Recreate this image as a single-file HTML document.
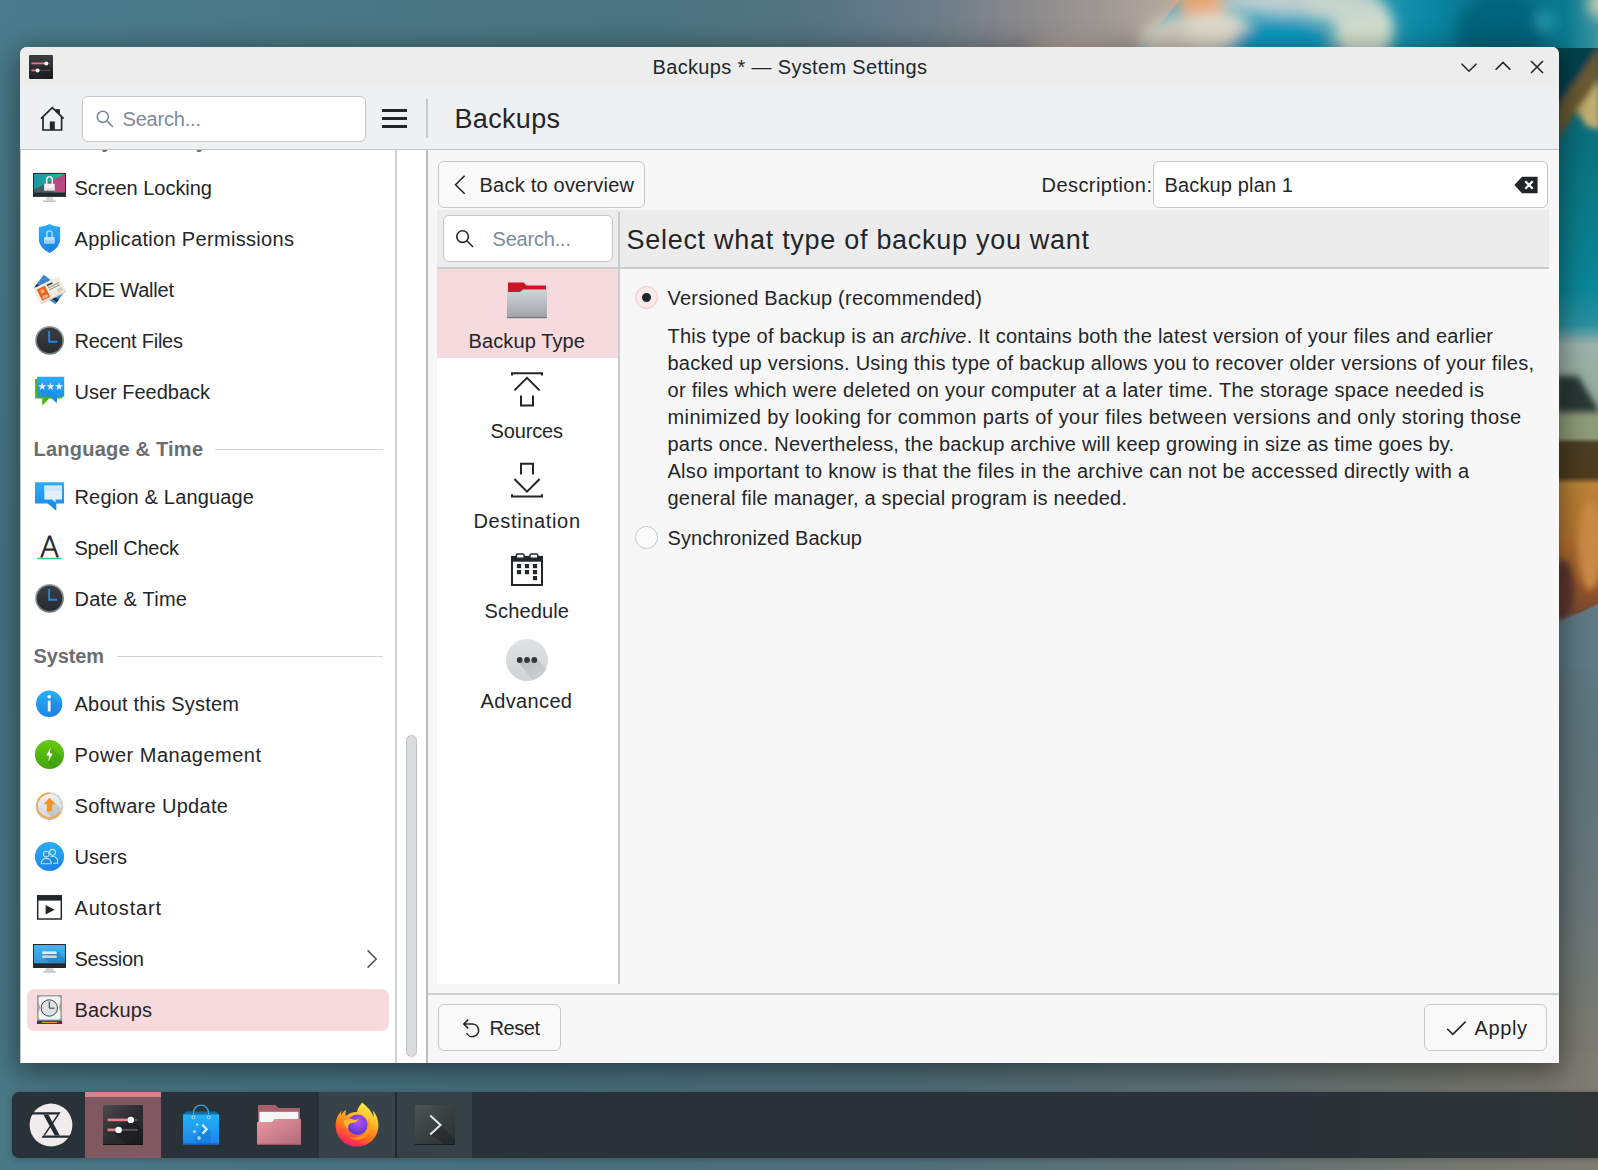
<!DOCTYPE html>
<html lang="en">
<head>
<meta charset="utf-8">
<title>Backups * — System Settings</title>
<style>
html,body{margin:0;padding:0;}
body{width:1598px;height:1170px;overflow:hidden;position:relative;background:#44707f;font-family:"Liberation Sans","DejaVu Sans",sans-serif;color:#232629;}
.a{position:absolute;}
.t{position:absolute;white-space:nowrap;font-size:20px;line-height:24px;color:#232629;letter-spacing:0px;}
.b{font-weight:bold;}
.h1{font-size:27px;line-height:32px;}
#wall{position:absolute;left:0;top:0;width:1598px;height:1170px;}
#winshadow{position:absolute;left:20px;top:47px;width:1539px;height:1016px;border-radius:7px 7px 0 0;box-shadow:0 6px 28px 4px rgba(0,0,0,0.42);background:#f7f7f7;}
#titlebar{position:absolute;left:20px;top:47px;width:1539px;height:40px;background:#ededed;border-radius:7px 7px 0 0;}
#toolbar{position:absolute;left:20px;top:87px;width:1539px;height:62px;background:#eff0f1;}
#tbline{position:absolute;left:20px;top:149px;width:1539px;height:1px;background:#c3c7ca;}
#side{position:absolute;left:20px;top:150px;width:375px;height:913px;background:#fff;overflow:hidden;}
#side .t,#side .a,#side .hl,#side svg{margin-left:-20px;margin-top:-150px;}
#sideline{position:absolute;left:395px;top:150px;width:2px;height:913px;background:#d0d2d3;}
#sbarea{position:absolute;left:397px;top:150px;width:30px;height:913px;background:#fff;}
#mainline{position:absolute;left:426px;top:150px;width:2px;height:913px;background:#b9bcc1;}
.field{position:absolute;background:#fff;border:1px solid #c4c8ca;border-radius:6px;box-sizing:border-box;}
.btn{position:absolute;background:#f9f9f9;border:1px solid #c6c9cb;border-radius:6px;box-sizing:border-box;}
.ph{color:#7d8a99;}
.hdr{color:#6a6e71;font-weight:bold;}
.hl{position:absolute;height:1px;background:#d3d6d8;}
svg{position:absolute;overflow:visible;}
</style>
</head>
<body>
<svg id="wall" width="1598" height="1170" viewBox="0 0 1598 1170">
<defs>
<linearGradient id="gbase" x1="0" y1="0" x2="0" y2="1"><stop offset="0" stop-color="#4b7c8c"/><stop offset="0.5" stop-color="#467482"/><stop offset="1" stop-color="#4a7987"/></linearGradient>
<linearGradient id="gtop" x1="0" y1="0" x2="1" y2="0"><stop offset="0" stop-color="#4b7c8c"/><stop offset="0.40" stop-color="#49737f"/><stop offset="0.50" stop-color="#537481"/><stop offset="0.58" stop-color="#6a7c88"/><stop offset="0.64" stop-color="#8a898b"/><stop offset="0.70" stop-color="#a39c97"/><stop offset="0.73" stop-color="#b3a79d"/></linearGradient>
<linearGradient id="gtr" x1="0" y1="0" x2="1" y2="0"><stop offset="0" stop-color="#6fb2c4"/><stop offset="0.18" stop-color="#2aa0bf"/><stop offset="0.45" stop-color="#3aa2b8"/><stop offset="0.62" stop-color="#0c8ba7"/><stop offset="0.80" stop-color="#076c82"/><stop offset="0.93" stop-color="#0a7a8e"/><stop offset="1" stop-color="#3b93a0"/></linearGradient>
<linearGradient id="gright" x1="0" y1="0" x2="0" y2="1"><stop offset="0.0062" stop-color="#07505b"/><stop offset="0.0796" stop-color="#0a6f7c"/><stop offset="0.1416" stop-color="#0a7a86"/><stop offset="0.2212" stop-color="#0b8797"/><stop offset="0.2522" stop-color="#2b92a0"/><stop offset="0.2699" stop-color="#9fb3ac"/><stop offset="0.3186" stop-color="#93a99c"/><stop offset="0.3319" stop-color="#8f9d7c"/><stop offset="0.3522" stop-color="#8f9a78"/><stop offset="0.3566" stop-color="#4a3f25"/><stop offset="0.3867" stop-color="#4d3b20"/><stop offset="0.3929" stop-color="#b98438"/><stop offset="0.4425" stop-color="#b9752e"/><stop offset="0.4867" stop-color="#93532b"/><stop offset="0.5062" stop-color="#7a4a30"/><stop offset="0.5115" stop-color="#5f7a84"/><stop offset="0.6195" stop-color="#5e757c"/><stop offset="0.7788" stop-color="#6b7677"/><stop offset="0.8850" stop-color="#7b7a71"/><stop offset="1.0000" stop-color="#7d7b72"/></linearGradient>
<linearGradient id="gbot" x1="0" y1="0" x2="1" y2="0"><stop offset="0" stop-color="#497886"/><stop offset="0.3" stop-color="#46707d"/><stop offset="0.55" stop-color="#4f6e78"/><stop offset="0.75" stop-color="#5f7276"/><stop offset="0.9" stop-color="#737670"/><stop offset="1" stop-color="#7f7c72"/></linearGradient>
<filter id="bl" x="-40%" y="-40%" width="180%" height="180%"><feGaussianBlur stdDeviation="7"/></filter>
<filter id="bl2" x="-30%" y="-30%" width="160%" height="160%"><feGaussianBlur stdDeviation="3"/></filter>
<clipPath id="ctop"><rect x="0" y="0" width="1598" height="62"/></clipPath>
<clipPath id="cright"><rect x="1552" y="48" width="46" height="1122"/></clipPath>
</defs>
<rect width="1598" height="1170" fill="url(#gbase)"/>
<rect x="0" y="0" width="1598" height="62" fill="url(#gtop)"/>
<g clip-path="url(#ctop)">
<polygon points="1182,-2 1598,-2 1598,62 1128,62" fill="url(#gtr)"/>
<g filter="url(#bl)">
<ellipse cx="1186" cy="40" rx="46" ry="26" fill="#cdc9be"/><ellipse cx="1203" cy="2" rx="28" ry="14" fill="#eaa873"/>
<ellipse cx="1218" cy="30" rx="34" ry="18" fill="#dedacb"/>
<ellipse cx="1168" cy="54" rx="30" ry="12" fill="#cfc7b8"/>
<ellipse cx="1280" cy="44" rx="46" ry="22" fill="#1199bf"/>
<ellipse cx="1300" cy="0" rx="80" ry="16" fill="#bccdcf"/>
<ellipse cx="1364" cy="30" rx="30" ry="34" fill="#d3dfce"/>
<ellipse cx="1340" cy="8" rx="40" ry="14" fill="#c6d4cc"/>
<ellipse cx="1500" cy="30" rx="44" ry="34" fill="#05647a"/>
<ellipse cx="1600" cy="4" rx="12" ry="14" fill="#c4cdb0"/><ellipse cx="1545" cy="22" rx="10" ry="8" fill="#2a9db0"/>
<ellipse cx="1075" cy="52" rx="46" ry="14" fill="#aea398"/>
</g>
</g>
<g clip-path="url(#cright)">
<rect x="1545" y="40" width="53" height="1130" fill="url(#gright)"/>
<g filter="url(#bl2)">
<polygon points="1545,40 1600,40 1600,47 1556,109 1545,109" fill="#06424d"/>
<polygon points="1556,109 1600,47 1600,79 1556,141" fill="#6b5a33"/>
<polygon points="1600,79 1600,130 1586,126 1577,111" fill="#c3ad70"/>
<polygon points="1556,376 1578,376 1600,412 1556,412" fill="#2b3936"/>
<ellipse cx="1590" cy="545" rx="12" ry="45" fill="#c98a45"/>
<ellipse cx="1562" cy="590" rx="12" ry="30" fill="#5d3830"/>
</g>
<polygon points="1556,624 1600,603 1600,670 1556,670" fill="#5f7a84"/>
</g>
<rect x="0" y="1050" width="1598" height="120" fill="url(#gbot)"/>
</svg>

<div id="winshadow"></div>
<div id="titlebar"></div>
<div id="toolbar"></div>
<div id="tbline"></div>
<div id="side">
<svg width="0" height="0" style="left:0;top:0"><defs>
<linearGradient id="gblue" x1="0" y1="0" x2="0" y2="1"><stop offset="0" stop-color="#28aef5"/><stop offset="1" stop-color="#1c86ea"/></linearGradient>
<linearGradient id="ggreen" x1="0" y1="0" x2="0" y2="1"><stop offset="0" stop-color="#67cb12"/><stop offset="1" stop-color="#3fa50c"/></linearGradient>
<linearGradient id="gclk" x1="0" y1="0" x2="0" y2="1"><stop offset="0" stop-color="#9aa3a7"/><stop offset="1" stop-color="#6d777c"/></linearGradient><linearGradient id="gclk2" x1="0" y1="0" x2="0" y2="1"><stop offset="0" stop-color="#3a3e42"/><stop offset="1" stop-color="#272b2e"/></linearGradient>
<linearGradient id="gscr" x1="0" y1="0" x2="0" y2="1"><stop offset="0" stop-color="#4ab3ec"/><stop offset="1" stop-color="#2f96dc"/></linearGradient>
<linearGradient id="ggrey" x1="0" y1="0" x2="0" y2="1"><stop offset="0" stop-color="#f2f2f2"/><stop offset="1" stop-color="#d4d6d7"/></linearGradient>
<g id="iclock"><circle cx="16.600" cy="16.300" r="14.400" fill="url(#gclk)"/><circle cx="16.600" cy="16.300" r="12.800" fill="url(#gclk2)"/><path d="M16.150 7 V17.800 H24.100" fill="none" stroke="#2b84d6" stroke-width="1.900"/></g>
</defs></svg>
<!-- clipped header at top -->
<span class="t hdr" style="left:35.5px;top:129px;letter-spacing:-0.244px">Security &amp; Privacy</span>
<!-- Screen Locking -->
<svg style="left:33px;top:171px" width="33" height="33" viewBox="0 0 33 33">
<defs><linearGradient id="gsl1" x1="0" y1="0" x2="1" y2="0"><stop offset="0" stop-color="#1f97a8"/><stop offset="0.550" stop-color="#1fa89b"/><stop offset="1" stop-color="#1fc088"/></linearGradient>
<linearGradient id="gsl2" x1="0" y1="0" x2="1" y2="1"><stop offset="0" stop-color="#a8478f"/><stop offset="1" stop-color="#c4477a"/></linearGradient></defs>
<rect x="0" y="1.900" width="33" height="24" fill="#26292c"/>
<rect x="1" y="2.900" width="31" height="18.400" fill="url(#gsl1)"/>
<polygon points="32,2.900 32,21.300 21.500,21.300 15.500,11.300" fill="url(#gsl2)"/>
<polygon points="1,18.600 15.500,11.300 21.500,21.300 1,21.300" fill="#4e5d61"/>
<path d="M13.700 13 V8.600 a2.800 2.800 0 0 1 5.600 0 V13" fill="none" stroke="#e9f1f1" stroke-width="1.500"/>
<rect x="11.100" y="12.700" width="10.600" height="6.700" fill="#f3f3f3"/>
<rect x="11.100" y="17.400" width="10.600" height="2" fill="#dedede"/>
<polygon points="13.200,25.900 20,25.900 20.400,29.600 12.800,29.600" fill="#d4d8da"/><rect x="9.900" y="29.600" width="13" height="1.200" fill="#aab4b8"/>
</svg>
<span class="t" style="left:74.5px;top:176px;letter-spacing:-0.029px">Screen Locking</span>
<!-- Application Permissions -->
<svg style="left:33px;top:222px" width="33" height="33" viewBox="0 0 33 33">
<path d="M16.500 2 C13 3.800 9.500 4.600 5.900 4.900 V17 C5.900 23.500 11 28.400 16.500 30.900 C22 28.400 27.100 23.500 27.100 17 V4.900 C23.500 4.600 20 3.800 16.500 2 Z" fill="url(#gblue)"/>
<polygon points="21.700,15.100 27,20.400 24,25.400 19,29.400 11.100,21.400" fill="#1565c0" opacity="0.150"/>
<path d="M13.900 15.300 V11.700 a2.600 2.700 0 0 1 5.200 0 V15.300" fill="none" stroke="#a7d5f7" stroke-width="1.500"/>
<rect x="11.100" y="15.100" width="10.600" height="6.300" rx="0.400" fill="#bfe0fa"/>
<rect x="11.100" y="18.400" width="10.600" height="3" fill="#9bcff7"/>
</svg>
<span class="t" style="left:74.5px;top:227px;letter-spacing:0.326px">Application Permissions</span>
<!-- KDE Wallet -->
<svg style="left:33px;top:273px" width="33" height="33" viewBox="0 0 33 33">
<g transform="rotate(36 16.5 16.5)"><rect x="3" y="8" width="27" height="17" rx="1" fill="#3c86d0"/><rect x="3" y="19.500" width="27" height="3" fill="#232a33"/></g>
<g transform="rotate(-26 16.5 16.5)"><rect x="2.5" y="8.5" width="28" height="17.5" rx="1.2" fill="#efece2"/><rect x="2.5" y="24.600" width="28" height="1.400" fill="#d6d1c2"/>
<rect x="5" y="11" width="9" height="12.5" rx="0.8" fill="#e8651f"/><circle cx="9.5" cy="15" r="2" fill="#f6b48c"/><path d="M6.2 22.4 a3.3 3.3 0 0 1 6.6 0 Z" fill="#f6b48c"/>
<rect x="16" y="11" width="6" height="1.6" fill="#333"/><rect x="16" y="14" width="12" height="1" fill="#8a8577"/><rect x="16" y="16.2" width="12" height="1" fill="#8a8577"/><rect x="23" y="19.5" width="5.5" height="3.5" fill="#d6ccb6"/></g>
</svg>
<span class="t" style="left:74.5px;top:278px;letter-spacing:-0.224px">KDE Wallet</span>
<!-- Recent Files -->
<svg style="left:33px;top:324px" width="33" height="33" viewBox="0 0 33 33"><use href="#iclock"/></svg>
<span class="t" style="left:74.5px;top:329px;letter-spacing:-0.241px">Recent Files</span>
<!-- User Feedback -->
<svg style="left:33px;top:375px" width="33" height="33" viewBox="0 0 33 33">
<polygon points="2.100,4 29.200,4 29.200,23.600 16.200,23.600 9.200,30.700 9.200,23.600 2.100,23.600" fill="#4fb416"/>
<polygon points="4,1.800 31.200,1.800 31.200,21.700 24.100,21.700 23.800,28.300 17,21.700 4,21.700" fill="url(#gblue)"/>
<polygon points="6,14 13,11 23.800,21.700 23.800,26 17,21.700 10,21.700" fill="#1565c0" opacity="0.120"/>
<g fill="#e4f1fd"><polygon id="st" points="9.20,7.50 10.23,10.18 13.10,10.33 10.86,12.14 11.61,14.92 9.20,13.35 6.79,14.92 7.54,12.14 5.30,10.33 8.17,10.18"/><use href="#st" x="8.300"/><use href="#st" x="16.900"/></g>
</svg>
<span class="t" style="left:74.5px;top:380px;letter-spacing:-0.010px">User Feedback</span>
<!-- header -->
<span class="t hdr" style="left:33.5px;top:437px;letter-spacing:0.227px">Language &amp; Time</span>
<div class="hl" style="left:215px;top:449px;width:168px"></div>
<!-- Region & Language -->
<svg style="left:33px;top:480px" width="33" height="33" viewBox="0 0 33 33">
<polygon points="2,2.300 31,2.300 31,23.600 23.300,23.600 23.300,30.800 14.600,23.600 2,23.600" fill="url(#gblue)"/>
<polygon points="11.400,5.600 29,5.600 29,19.400 22.600,19.400 22.600,22.600 19,19.400 11.400,19.400" fill="#e3f0fc"/>
<polygon points="11.400,5.600 29,5.600 29,11 11.400,11" fill="#c9e2f9" opacity="0.7"/>
</svg>
<span class="t" style="left:74.5px;top:485px;letter-spacing:0.167px">Region &amp; Language</span>
<!-- Spell Check -->
<svg style="left:33px;top:531px" width="33" height="33" viewBox="0 0 33 33">
<text x="16.700" y="25.500" text-anchor="middle" font-family="'DejaVu Sans Light','DejaVu Sans','Liberation Sans',sans-serif" font-weight="200" font-size="28.200" fill="#232629" stroke="#232629" stroke-width="0.800" stroke-linejoin="round">A</text>
<rect x="4" y="26.800" width="24.600" height="1.400" fill="#2ecc71"/>
</svg>
<span class="t" style="left:74.5px;top:536px;letter-spacing:-0.222px">Spell Check</span>
<!-- Date & Time -->
<svg style="left:33px;top:582px" width="33" height="33" viewBox="0 0 33 33"><use href="#iclock"/></svg>
<span class="t" style="left:74.5px;top:587px;letter-spacing:0.245px">Date &amp; Time</span>
<!-- header -->
<span class="t hdr" style="left:33.5px;top:644px;letter-spacing:-0.131px">System</span>
<div class="hl" style="left:117px;top:656px;width:266px"></div>
<!-- About this System -->
<svg style="left:33px;top:687px" width="33" height="33" viewBox="0 0 33 33">
<circle cx="16.200" cy="16.800" r="13.200" fill="url(#gblue)"/>
<polygon points="17.600,8 29,19.600 26,26 19.600,29.400 16,25" fill="#1565c0" opacity="0.180"/>
<rect x="14.800" y="13.600" width="2.800" height="10.800" fill="#f4f9fe"/><circle cx="16.200" cy="9.800" r="1.800" fill="#f4f9fe"/>
</svg>
<span class="t" style="left:74.5px;top:692px;letter-spacing:0.207px">About this System</span>
<!-- Power Management -->
<svg style="left:33px;top:738px" width="33" height="33" viewBox="0 0 33 33">
<circle cx="16.5" cy="16.5" r="14.6" fill="url(#ggreen)"/>
<polygon points="18,9 30,21 26,28 19,30.8 15,24" fill="#2e7d07" opacity="0.2"/>
<polygon points="17.6,9.6 13.2,17.4 16.2,17.4 15.2,23.6 19.8,15.4 16.8,15.4" fill="#fff"/>
</svg>
<span class="t" style="left:74.5px;top:743px;letter-spacing:0.501px">Power Management</span>
<!-- Software Update -->
<svg style="left:33px;top:789px" width="33" height="33" viewBox="0 0 33 33">
<circle cx="16.500" cy="17.300" r="13.700" fill="#b4b8ba"/>
<circle cx="16.500" cy="16.600" r="13.500" fill="url(#ggrey)"/>
<polygon points="19.500,11 28.800,20.500 25.200,25.600 19.500,29.400 13.500,23" fill="#8f9496" opacity="0.3"/>
<circle cx="16.500" cy="16.600" r="12.400" fill="none" stroke="#c9cccd" stroke-width="1.300"/>
<path d="M16.500 4.200 A12.400 12.400 0 1 0 27.200 22.800" fill="none" stroke="#f7a431" stroke-width="1.500"/>
<polygon points="16.500,8.800 22.400,15.200 19.100,15.200 19.100,22.600 13.900,22.600 13.900,15.200 10.600,15.200" fill="#f8931c"/>
</svg>
<span class="t" style="left:74.5px;top:794px;letter-spacing:0.323px">Software Update</span>
<!-- Users -->
<svg style="left:33px;top:840px" width="33" height="33" viewBox="0 0 33 33">
<circle cx="16.5" cy="16.5" r="14.6" fill="url(#gblue)"/>
<polygon points="15,12 29.500,22 26,27.600 20,30.600 9,23.600" fill="#1565c0" opacity="0.160"/><g fill="none" stroke="#e3f1fd" stroke-width="1.100" opacity="0.820"><circle cx="19.600" cy="12.300" r="2.900"/><path d="M17.600 16.700 a5.200 5.200 0 0 1 7.200 5 V23.200 H20.200"/><circle cx="13.300" cy="14.100" r="2.800"/><path d="M8.200 23.700 a5.100 5.300 0 0 1 10.200 0 Z"/></g>
</svg>
<span class="t" style="left:74.5px;top:845px;letter-spacing:0.066px">Users</span>
<!-- Autostart -->
<svg style="left:33px;top:891px" width="33" height="33" viewBox="0 0 33 33">
<rect x="4.7" y="5" width="23.6" height="23" fill="#fff" stroke="#232629" stroke-width="1.5"/>
<rect x="4" y="4.2" width="25" height="5.4" fill="#232629"/>
<polygon points="12.6,14 21.6,18.7 12.6,23.4" fill="#232629"/>
</svg>
<span class="t" style="left:74.5px;top:896px;letter-spacing:0.807px">Autostart</span>
<!-- Session -->
<svg style="left:33px;top:942px" width="33" height="33" viewBox="0 0 33 33">
<rect x="0" y="2" width="33" height="24" fill="#26292c"/>
<rect x="1" y="3" width="31" height="18.3" fill="url(#gscr)"/>
<polygon points="24,9 32,17 32,21.3 17,21.3 9.5,14" fill="#1a5f9c" opacity="0.35"/>
<rect x="9.3" y="9.4" width="14.4" height="2.6" fill="#e6e9eb"/><rect x="9.3" y="13.4" width="14.4" height="2.6" fill="#cfd4d7"/>
<polygon points="13,26 20,26 21.3,29.4 11.7,29.4" fill="#d0d4d6"/><rect x="10" y="29.4" width="13" height="1.2" fill="#a9bdc8"/>
</svg>
<span class="t" style="left:74.5px;top:947px;letter-spacing:-0.276px">Session</span>
<svg style="left:366px;top:949px" width="12" height="20" viewBox="0 0 12 20" fill="none" stroke="#4d5256" stroke-width="1.5"><path d="M1.6 1.4 L10.2 10 L1.6 18.6"/></svg>
<!-- Backups (selected) -->
<div class="a" style="left:27px;top:989px;width:362px;height:42px;background:#f7dade;border-radius:7px"></div>
<svg style="left:33px;top:993px" width="33" height="33" viewBox="0 0 33 33">
<rect x="4" y="2" width="25" height="29" fill="#9da3a4"/>
<path d="M7.5 3.5 H25.5 Q27.5 3.5 27.5 6 Q27.5 10 26 14 Q27.5 18 27.5 24 Q27.5 26.5 25.5 26.5 H7.5 Q5.500 26.5 5.500 24 Q5.500 18 7 14 Q5.500 10 5.500 6 Q5.500 3.500 7.500 3.500 Z" fill="#f3f4f4"/>
<circle cx="16.3" cy="15" r="8.2" fill="#dfe1e2" stroke="#33373a" stroke-width="0.9"/>
<path d="M16.3 8.6 V15.2 H21.6" fill="none" stroke="#33373a" stroke-width="1"/>
<rect x="4" y="27.6" width="25" height="3.4" fill="#3c4043"/><rect x="9" y="28.9" width="15" height="1" fill="#f6a623"/>
</svg>
<span class="t" style="left:74.5px;top:998px;letter-spacing:0.130px">Backups</span>

</div>
<div id="sideline"></div>
<div class="a" style="left:20px;top:150px;width:1px;height:913px;background:#c3c6c8"></div>
<div id="sbarea"></div>
<div class="a" style="left:406px;top:735px;width:11px;height:322px;border-radius:6px;background:#d9dbdc;border:1px solid #bfc2c4;box-sizing:border-box"></div>
<div id="mainline"></div>
<!-- title bar -->
<svg style="left:29px;top:55px" width="24" height="24" viewBox="0 0 24 24">
<defs><linearGradient id="gsi" x1="0" y1="0" x2="0" y2="1"><stop offset="0" stop-color="#3b3d40"/><stop offset="1" stop-color="#1f2124"/></linearGradient></defs>
<rect width="24" height="24" rx="1" fill="url(#gsi)"/>
<polygon points="17,8 24,15 24,24 13,24 8,15 10,13 15,10" fill="#000" opacity="0.18"/>
<rect x="2.5" y="7.7" width="19" height="1.3" fill="#4a4d50"/><rect x="2.5" y="14.7" width="19" height="1.3" fill="#4a4d50"/>
<rect x="2.5" y="7.5" width="14" height="1.8" fill="#e8717e"/><rect x="2.5" y="14.5" width="6" height="1.8" fill="#e8717e"/>
<circle cx="17.3" cy="8.4" r="2" fill="#fff"/><circle cx="8.6" cy="15.4" r="2" fill="#fff"/>
</svg>
<span class="t" style="left:652.5px;top:55px;letter-spacing:0.340px">Backups * — System Settings</span>
<svg style="left:1460px;top:58px" width="90" height="20" viewBox="0 0 90 20" fill="none" stroke="#232629" stroke-width="1.6">
<path d="M1.6 5.8 L9 13.2 L16.4 5.8"/>
<path d="M35.6 11.8 L43 4.4 L50.4 11.8"/>
<path d="M71 3 L83 15 M83 3 L71 15"/>
</svg>
<!-- toolbar -->
<svg style="left:40px;top:106px" width="25" height="26" viewBox="0 0 25 26" fill="none" stroke="#232629" stroke-width="1.7">
<path d="M1 12.6 L12.3 1.6 L23.6 12.6"/>
<path d="M3 11 V24 H21.6 V11"/>
<path d="M15.5 3.5 H19.6 V8.6" stroke="none" fill="#232629"/>
<polygon points="15,3.3 19.8,3.3 19.8,8.8" fill="#232629" stroke="none"/>
<rect x="9.8" y="15.5" width="5" height="8.5" fill="#232629" stroke="none"/>
</svg>
<div class="field" style="left:82px;top:96px;width:284px;height:46px;"></div>
<svg style="left:95px;top:109px" width="20" height="20" viewBox="0 0 20 20" fill="none" stroke="#7d8a99" stroke-width="1.6"><circle cx="7.8" cy="7.8" r="5.6"/><path d="M11.9 11.9 L18 18"/></svg>
<span class="t ph" style="left:122.5px;top:107px;letter-spacing:-0.193px">Search...</span>
<div class="a" style="left:382px;top:109px;width:25px;height:3px;background:#232629"></div>
<div class="a" style="left:382px;top:117px;width:25px;height:3px;background:#232629"></div>
<div class="a" style="left:382px;top:125px;width:25px;height:3px;background:#232629"></div>
<div class="a" style="left:426px;top:99px;width:2px;height:39px;background:#c9cccf"></div>
<span class="t h1" style="left:454.5px;top:103px;letter-spacing:0.323px">Backups</span>

<!-- Back button + description -->
<div class="btn" style="left:438px;top:161px;width:207px;height:47px;"></div>
<svg style="left:453px;top:174px" width="14" height="22" viewBox="0 0 14 22" fill="none" stroke="#232629" stroke-width="1.6"><path d="M11.6 1.8 L2.6 10.8 L11.6 19.8"/></svg>
<span class="t" style="left:479.5px;top:173px;letter-spacing:0.222px">Back to overview</span>
<span class="t" style="left:1041.5px;top:173px;letter-spacing:0.445px">Description:</span>
<div class="field" style="left:1153px;top:161px;width:395px;height:47px;"></div>
<span class="t" style="left:1164.5px;top:173px;letter-spacing:0.145px">Backup plan 1</span>
<svg style="left:1514px;top:176px" width="24" height="18" viewBox="0 0 24 18"><polygon points="0.4,9 8,0.8 23.6,0.8 23.6,17.2 8,17.2" fill="#232629"/><path d="M11.3 5.3 L18.7 12.7 M18.7 5.3 L11.3 12.700" stroke="#fff" stroke-width="2.3" fill="none"/></svg>
<!-- heading strip -->
<div class="a" style="left:437px;top:210px;width:1112px;height:58px;background:#ececec"></div>
<div class="a" style="left:437px;top:267px;width:1112px;height:2px;background:#c9cbcc"></div>
<div class="field" style="left:443px;top:215px;width:170px;height:47px;"></div>
<svg style="left:455px;top:229px" width="20" height="20" viewBox="0 0 20 20" fill="none" stroke="#232629" stroke-width="1.6"><circle cx="7.6" cy="7.600" r="5.8"/><path d="M11.8 11.8 L18 18"/></svg>
<span class="t ph" style="left:492.5px;top:227px;letter-spacing:-0.193px">Search...</span>
<span class="t h1" style="left:626.5px;top:224px;letter-spacing:0.713px">Select what type of backup you want</span>
<!-- nav list -->
<div class="a" style="left:437px;top:269px;width:181px;height:715px;background:#fff"></div>
<div class="a" style="left:618px;top:212px;width:2px;height:772px;background:#c9cbcc"></div>
<div class="a" style="left:437px;top:269px;width:181px;height:89px;background:#f7dade"></div>
<svg style="left:507px;top:282px" width="40" height="37" viewBox="0 0 40 37">
<defs><linearGradient id="gfold" x1="0" y1="0" x2="0" y2="1"><stop offset="0" stop-color="#d2d5d8"/><stop offset="1" stop-color="#9fa3a8"/></linearGradient></defs>
<path d="M1 0.600 H16.600 L19.600 3.600 H39 V12 H1 Z" fill="#cd162a"/>
<path d="M0 10 H13 L16 7.400 H40 V36 H0 Z" fill="url(#gfold)"/>
<rect x="0" y="35" width="40" height="1.200" fill="#72777c"/>
</svg>
<span class="t" style="left:468.5px;top:329px;letter-spacing:0.123px">Backup Type</span>
<svg style="left:511px;top:372px" width="32" height="36" viewBox="0 0 32 36" fill="none" stroke="#232629" stroke-width="2"><path d="M1 3.500 V1.300 H31 V3.500"/><path d="M3.400 18.400 L16 5.800 L28.600 18.400"/><path d="M10 23.500 V33.600 H22 V23.500"/></svg>
<span class="t" style="left:490.5px;top:419px;letter-spacing:-0.146px">Sources</span>
<svg style="left:511px;top:462px" width="32" height="36" viewBox="0 0 32 36" fill="none" stroke="#232629" stroke-width="2"><path d="M10 12.500 V1.800 H22 V12.500"/><path d="M3.400 17 L16 29.600 L28.600 17"/><path d="M1 32.300 V34.500 H31 V32.300"/></svg>
<span class="t" style="left:473.5px;top:509px;letter-spacing:0.644px">Destination</span>
<svg style="left:510px;top:553px" width="34" height="34" viewBox="0 0 34 34">
<rect x="2" y="4" width="30" height="28" fill="none" stroke="#232629" stroke-width="2"/>
<rect x="1" y="2.900" width="32" height="5.800" fill="#232629"/>
<rect x="6.300" y="0.900" width="7.900" height="4.400" rx="1.600" fill="#fff" stroke="#232629" stroke-width="1.500"/><rect x="19.900" y="0.900" width="7.900" height="4.400" rx="1.600" fill="#fff" stroke="#232629" stroke-width="1.500"/>
<g fill="#232629"><rect x="6.900" y="11" width="4.200" height="4.200"/><rect x="14.900" y="11" width="4.200" height="4.200"/><rect x="22.900" y="11" width="4.200" height="4.200"/><rect x="6.900" y="17" width="4.200" height="4.200"/><rect x="14.900" y="17" width="4.200" height="4.200"/><rect x="22.900" y="17" width="4.200" height="4.200"/><rect x="22.900" y="23" width="4.200" height="4.200"/></g>
</svg>
<span class="t" style="left:484.5px;top:599px;letter-spacing:0.156px">Schedule</span>
<svg style="left:506px;top:639px" width="42" height="42" viewBox="0 0 42 42">
<defs><linearGradient id="gadvs" x1="0.2" y1="0" x2="0.9" y2="1"><stop offset="0" stop-color="#8f9597" stop-opacity="0.42"/><stop offset="1" stop-color="#8f9597" stop-opacity="0.05"/></linearGradient><linearGradient id="gadv" x1="0" y1="0" x2="0" y2="1"><stop offset="0" stop-color="#dfe2e3"/><stop offset="1" stop-color="#d0d4d5"/></linearGradient></defs>
<circle cx="21" cy="21" r="21" fill="url(#gadv)"/>
<polygon points="12,23 30,19 41,30 35,38 27,41.500" fill="url(#gadvs)"/>
<circle cx="13.700" cy="21" r="2.900" fill="#33373a"/><circle cx="21" cy="21" r="2.900" fill="#33373a"/><circle cx="28.300" cy="21" r="2.900" fill="#33373a"/>
</svg>
<span class="t" style="left:480.5px;top:689px;letter-spacing:0.362px">Advanced</span>
<!-- content -->
<div class="a" style="left:635px;top:286px;width:23px;height:23px;border-radius:50%;box-sizing:border-box;border:1px solid #f3c6cc;background:#fbe9eb"></div>
<div class="a" style="left:642px;top:293px;width:9px;height:9px;border-radius:50%;background:#232629"></div>
<span class="t" style="left:667.5px;top:286px;letter-spacing:0.226px">Versioned Backup (recommended)</span>
<span class="t" style="left:667.5px;top:324px;letter-spacing:0.240px">This type of backup is an <i>archive</i>. It contains both the latest version of your files and earlier</span>
<span class="t" style="left:667.5px;top:351px;letter-spacing:0.237px">backed up versions. Using this type of backup allows you to recover older versions of your files,</span>
<span class="t" style="left:667.5px;top:378px;letter-spacing:0.275px">or files which were deleted on your computer at a later time. The storage space needed is</span>
<span class="t" style="left:667.5px;top:405px;letter-spacing:0.405px">minimized by looking for common parts of your files between versions and only storing those</span>
<span class="t" style="left:667.5px;top:432px;letter-spacing:0.192px">parts once. Nevertheless, the backup archive will keep growing in size as time goes by.</span>
<span class="t" style="left:667.5px;top:459px;letter-spacing:0.284px">Also important to know is that the files in the archive can not be accessed directly with a</span>
<span class="t" style="left:667.5px;top:486px;letter-spacing:0.211px">general file manager, a special program is needed.</span>
<div class="a" style="left:635px;top:526px;width:23px;height:23px;border-radius:50%;box-sizing:border-box;border:1px solid #c4c7c9;background:#fcfcfc"></div>
<span class="t" style="left:667.5px;top:526px;letter-spacing:0.058px">Synchronized Backup</span>
<!-- footer -->
<div class="a" style="left:428px;top:993px;width:1131px;height:2px;background:#cdd0d2"></div>
<div class="btn" style="left:438px;top:1004px;width:123px;height:47px;"></div>
<svg style="left:462px;top:1018px" width="20" height="20" viewBox="0 0 20 20" fill="none" stroke="#232629" stroke-width="1.600"><path d="M6.200 1.600 L1.800 6 L6.200 10.400"/><path d="M2.200 6 H10.400 A6.300 6.300 0 1 1 4.600 15"/></svg>
<span class="t" style="left:489.5px;top:1016px;letter-spacing:-0.438px">Reset</span>
<div class="btn" style="left:1424px;top:1004px;width:123px;height:47px;"></div>
<svg style="left:1446px;top:1018px" width="21" height="20" viewBox="0 0 21 20" fill="none" stroke="#232629" stroke-width="1.600"><path d="M1.200 10.800 L6.800 16.400 L19.600 3.600"/></svg>
<span class="t" style="left:1474.5px;top:1016px;letter-spacing:0.617px">Apply</span>

<!-- taskbar -->
<div class="a" style="left:12px;top:1092px;width:1600px;height:66px;background:#283238;border-radius:7px 0 0 7px;box-shadow:0 1px 6px rgba(0,0,0,0.25)"></div>
<div class="a" style="left:1100px;top:1092px;width:498px;height:66px;background:linear-gradient(90deg,rgba(50,52,54,0),rgba(50,52,54,0.75))"></div>
<div class="a" style="left:85px;top:1092px;width:76px;height:66px;background:#80585f"></div>
<div class="a" style="left:85px;top:1092px;width:76px;height:5px;background:#d9818b"></div>
<div class="a" style="left:319px;top:1092px;width:76px;height:66px;background:#384349"></div>
<div class="a" style="left:395px;top:1092px;width:2px;height:66px;background:#222a2f"></div>
<div class="a" style="left:397px;top:1092px;width:75px;height:66px;background:#364146"></div>
<!-- launcher -->
<svg style="left:29px;top:1103px" width="44" height="44" viewBox="0 0 44 44">
<circle cx="22" cy="22" r="21.400" fill="#efeceb"/>
<g fill="#232a30"><polygon points="2.500,9.200 31.500,9.200 30.200,11.400 2,11.400"/><polygon points="13.800,32.600 42,32.600 41.400,34.800 12.500,34.800"/>
<polygon points="14.400,11.400 19.400,11.400 30.800,32.600 25.800,32.600"/><polygon points="28.400,11.400 30.200,11.400 16,32.600 14.200,32.600"/></g>
</svg>
<!-- settings -->
<svg style="left:103px;top:1105px" width="40" height="40" viewBox="0 0 40 40">
<defs><linearGradient id="gsi2" x1="0" y1="0" x2="1" y2="1"><stop offset="0" stop-color="#4a4c4f"/><stop offset="0.5" stop-color="#2a2c2f"/><stop offset="1" stop-color="#202225"/></linearGradient></defs>
<rect width="40" height="40" rx="1" fill="url(#gsi2)"/>
<rect y="39" width="40" height="1" fill="#16181a"/>
<polygon points="28,12 40,24 40,40 24,40 8,24.600 16,22 24,17" fill="#000" opacity="0.2"/>
<rect x="4.600" y="13.800" width="30" height="2.200" fill="#4d5053"/><rect x="4.600" y="23.800" width="30" height="2.200" fill="#4d5053"/>
<rect x="4.600" y="13.600" width="23" height="2.600" fill="#ee7c89"/><rect x="4.600" y="23.600" width="11" height="2.600" fill="#ee7c89"/>
<circle cx="27.800" cy="14.900" r="3.200" fill="#fff"/><circle cx="15.600" cy="24.900" r="3.200" fill="#fff"/>
</svg>
<!-- discover bag -->
<svg style="left:183px;top:1103px" width="36" height="43" viewBox="0 0 36 43">
<defs><linearGradient id="gbag" x1="0" y1="0" x2="0" y2="1"><stop offset="0" stop-color="#21b4f5"/><stop offset="1" stop-color="#1d84ea"/></linearGradient></defs>
<polygon points="3,8.500 33,8.500 36,11.600 0,11.600" fill="#176a9f"/>
<rect x="0" y="11.400" width="36" height="30" fill="url(#gbag)"/>
<rect x="0" y="40.400" width="36" height="1.200" fill="#1767c2"/>
<path d="M10.400 14 V9.800 a7.600 7.600 0 0 1 15.200 0 V14" fill="none" stroke="#25a9ee" stroke-width="1.300"/>
<circle cx="10.400" cy="14.400" r="1.400" fill="#1d84ea" stroke="#e9f5fd" stroke-width="0.800"/><circle cx="25.600" cy="14.400" r="1.400" fill="#1d84ea" stroke="#e9f5fd" stroke-width="0.800"/>
<polygon points="21,22 28,29 28,41.400 14,41.400 11,37" fill="#0d5fb8" opacity="0.25"/>
<path d="M19.400 21.800 L23.600 26.200 L19.400 30.600" fill="none" stroke="#d9eefc" stroke-width="2.300"/>
<rect x="13.200" y="20.600" width="2" height="2" fill="#cfe9fb"/><circle cx="11.400" cy="28.600" r="1.600" fill="#9dd3f8"/><circle cx="16" cy="35" r="1.900" fill="#9dd3f8"/>
</svg>
<!-- folder -->
<svg style="left:257px;top:1105px" width="44" height="40" viewBox="0 0 44 40">
<defs><linearGradient id="gfp" x1="0" y1="0" x2="1" y2="1"><stop offset="0" stop-color="#ec96a1"/><stop offset="1" stop-color="#b06c78"/></linearGradient></defs>
<path d="M1 0 H18.500 L21.500 3 H43 V30 H1 Z" fill="#a6606b"/>
<rect x="2.400" y="6.800" width="39" height="14" fill="#f6f6f6"/>
<path d="M0 17 H15 L17.600 14 H44 V39.600 H0 Z" fill="url(#gfp)"/>
<rect x="0" y="38.800" width="44" height="1.200" fill="#9a5a65"/>
</svg>
<!-- firefox -->
<svg style="left:335px;top:1102px" width="44" height="45" viewBox="0 0 44 45">
<defs>
<linearGradient id="gff1" x1="0.700" y1="0" x2="0.250" y2="1"><stop offset="0" stop-color="#fff44f"/><stop offset="0.300" stop-color="#ffbd2e"/><stop offset="0.600" stop-color="#ff7a1a"/><stop offset="0.850" stop-color="#ff3647"/><stop offset="1" stop-color="#e31587"/></linearGradient>
<radialGradient id="gff2" cx="0.550" cy="0.350" r="0.700"><stop offset="0" stop-color="#b54dff"/><stop offset="0.600" stop-color="#7a3fe0"/><stop offset="1" stop-color="#4a3bd0"/></radialGradient>
</defs>
<path d="M27 0.600 C25 4 22.500 6 22 10 C18 9.800 14 11 11 14 C10 11.500 10.500 9 11.500 7.600 C9 9 7.400 11 6.400 13.400 C6 11.600 6.200 10 6.800 8.400 C2.400 12.600 0.600 18 0.600 23.400 C0.600 35.400 10 44.600 22 44.600 C34 44.600 43.400 35.400 43.400 23.600 C43.400 17 41 12 37.600 8.600 C38.600 11.400 38.800 13.600 38.400 15 C36.400 8.600 32 4.600 27 0.600 Z" fill="url(#gff1)"/>
<circle cx="22.500" cy="22.800" r="10.200" fill="url(#gff2)"/>
<path d="M8.500 19.500 C11 16.600 15 16 18.400 17.400 C20.600 18.400 22 18 23.600 16.800 C22.600 19.600 20 21 17.600 21 C14 21 12.600 23.600 13.400 27 C11 25.600 8.600 22.600 8.500 19.500 Z" fill="#ffb62b"/>
<path d="M33 17 C36.500 22 36 30 31 34.600 C26 39 18.600 38.600 14 35 C20 37 27.500 35 30.600 29.600 C33 25.400 33.400 21 33 17 Z" fill="#ff9a1f" opacity="0.850"/>
</svg>
<!-- more tasks -->
<svg style="left:415px;top:1105px" width="40" height="40" viewBox="0 0 40 40">
<defs><linearGradient id="gmt" x1="0" y1="0" x2="1" y2="1"><stop offset="0" stop-color="#4d5554"/><stop offset="0.500" stop-color="#3a3f40"/><stop offset="1" stop-color="#2c3032"/></linearGradient></defs>
<rect width="40" height="40" rx="1" fill="url(#gmt)"/>
<rect y="39" width="40" height="1" fill="#1d2022"/>
<polygon points="25.500,20 40,34.500 40,40 30,40 15.500,29.600" fill="#000" opacity="0.180"/>
<path d="M15.200 10.600 L25.600 20 L15.200 29.400" fill="none" stroke="#e6e7e7" stroke-width="2"/>
</svg>

</body>
</html>
